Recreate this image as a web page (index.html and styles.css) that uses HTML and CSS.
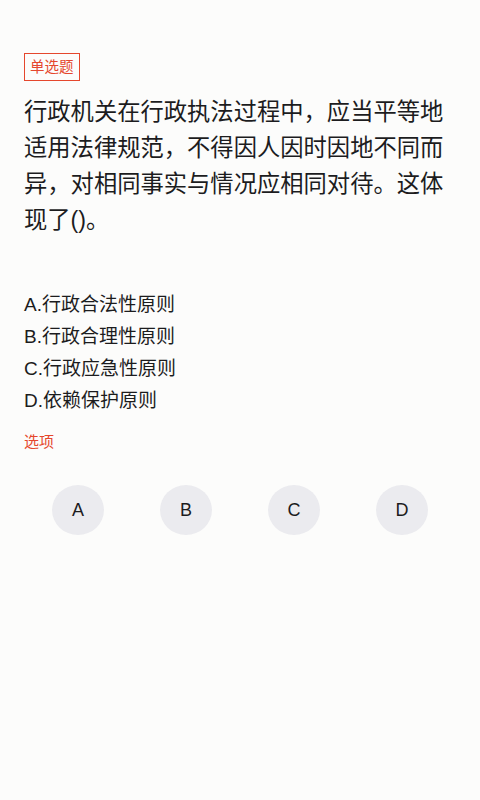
FILE: index.html
```html
<!DOCTYPE html>
<html lang="zh-CN">
<head>
<meta charset="utf-8">
<title>单选题</title>
<link rel="stylesheet" href="styles.css">
</head>
<body>
<main class="page">
  <div class="tag">单选题</div>
  <p class="question">行政机关在行政执法过程中，应当平等地适用法律规范，不得因人因时因地不同而异，对相同事实与情况应相同对待。这体现了()。</p>
  <ul class="options">
    <li>A.行政合法性原则</li>
    <li>B.行政合理性原则</li>
    <li>C.行政应急性原则</li>
    <li>D.依赖保护原则</li>
  </ul>
  <div class="label">选项</div>
  <div class="choices">
    <div class="choice"><span class="circle">A</span></div>
    <div class="choice"><span class="circle">B</span></div>
    <div class="choice"><span class="circle">C</span></div>
    <div class="choice"><span class="circle">D</span></div>
  </div>
</main>
</body>
</html>
```
FILE: styles.css
```css
html, body {
  margin: 0;
  padding: 0;
  background: #fcfcfb;
}
body {
  font-family: "Liberation Sans", "Noto Sans CJK SC", sans-serif;
  color: #1c1c1e;
  width: 480px;
  height: 800px;
}
.page {
  padding: 53px 24px 0;
}
.tag {
  display: inline-block;
  box-sizing: border-box;
  height: 28px;
  line-height: 26px;
  padding: 0 5px;
  font-size: 14.5px;
  color: #e5472d;
  border: 1px solid #e5472d;
}
.question {
  margin: 13px 0 0;
  font-size: 23.3px;
  line-height: 36px;
  color: #1c1c1e;
}
.options {
  list-style: none;
  margin: 51px 0 0;
  padding: 0;
}
.options li {
  font-size: 19px;
  line-height: 32px;
  color: #1c1c1e;
}
.label {
  margin-top: 13px;
  font-size: 15px;
  line-height: 24px;
  color: #e5472d;
}
.choices {
  display: grid;
  grid-template-columns: repeat(4, 1fr);
  margin-top: 31px;
}
.choice {
  display: flex;
  justify-content: center;
}
.circle {
  width: 52px;
  height: 50px;
  border-radius: 50%;
  background: #ebebef;
  display: flex;
  align-items: center;
  justify-content: center;
  font-size: 18px;
  color: #1c1c1e;
}
```
